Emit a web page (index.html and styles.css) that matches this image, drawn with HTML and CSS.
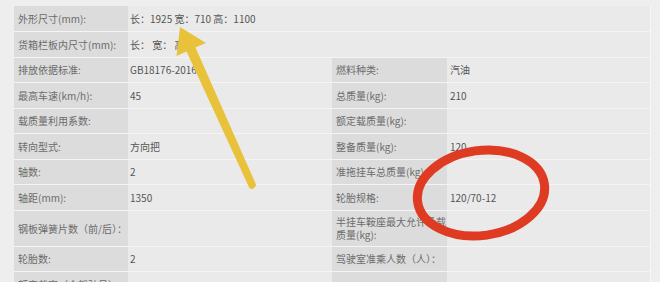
FILE: index.html
```html
<!DOCTYPE html>
<html lang="zh-CN">
<head>
<meta charset="utf-8">
<link rel="stylesheet" href="styles.css">
</head>
<body>
<div class="page">
  <table class="spec">
    <colgroup>
      <col class="c-label1"><col class="c-val1"><col class="c-label2"><col class="c-val2">
    </colgroup>
    <tr><td class="lab">外形尺寸(mm):</td><td class="val" colspan="3">长：1925 宽：710 高：1100</td></tr>
    <tr><td class="lab">货箱栏板内尺寸(mm):</td><td class="val" colspan="3">长： 宽： 高：</td></tr>
    <tr><td class="lab">排放依据标准:</td><td class="val">GB18176-2016</td><td class="lab lab2">燃料种类:</td><td class="val val2">汽油</td></tr>
    <tr><td class="lab">最高车速(km/h):</td><td class="val">45</td><td class="lab lab2">总质量(kg):</td><td class="val val2">210</td></tr>
    <tr><td class="lab">载质量利用系数:</td><td class="val"></td><td class="lab lab2">额定载质量(kg):</td><td class="val val2"></td></tr>
    <tr><td class="lab">转向型式:</td><td class="val">方向把</td><td class="lab lab2">整备质量(kg):</td><td class="val val2">120</td></tr>
    <tr><td class="lab">轴数:</td><td class="val">2</td><td class="lab lab2">准拖挂车总质量(kg):</td><td class="val val2"></td></tr>
    <tr><td class="lab">轴距(mm):</td><td class="val">1350</td><td class="lab lab2">轮胎规格:</td><td class="val val2">120/70-12</td></tr>
    <tr class="tall"><td class="lab">钢板弹簧片数（前/后）：</td><td class="val"></td><td class="lab lab2">半挂车鞍座最大允许承载质量(kg):</td><td class="val val2"></td></tr>
    <tr><td class="lab">轮胎数:</td><td class="val">2</td><td class="lab lab2">驾驶室准乘人数（人）：</td><td class="val val2"></td></tr>
    <tr><td class="lab">额定载客（含驾驶员）：</td><td class="val"></td><td class="lab lab2"></td><td class="val val2"></td></tr>
  </table>
  <svg class="marks" width="660" height="282" viewBox="0 0 660 282">
    <polygon class="arrow" points="180,27 206,43 195.5,47.5 256.4,185.4 253,189 249.6,188.6 186.5,51.5 176.5,56"/>
    <ellipse class="ring" cx="481" cy="193" rx="64" ry="42.5" transform="rotate(-8 481 193)"/>
  </svg>
</div>
</body>
</html>
```
FILE: styles.css
```css
html, body {
  margin: 0;
  padding: 0;
  background: #eeeeee;
  overflow: hidden;
}
.page {
  position: relative;
  width: 660px;
  height: 282px;
  padding: 6px 0 0 14px;
  box-sizing: border-box;
  font-family: "Noto Sans CJK SC", "Noto Sans", sans-serif;
  font-size: 10px;
}
.spec {
  border-collapse: collapse;
  table-layout: fixed;
  width: 636px;
  border-right: 1px solid #f6f6f6;
}
.c-label1 { width: 114px; }
.c-val1 { width: 204px; }
.c-label2 { width: 115px; }
.c-val2 { width: 203px; }
.spec tr { height: 25.5px; }
.spec tr.tall { height: 36px; }
.spec td {
  padding: 0 0 0 4px;
  border-bottom: 1px solid #f4f4f4;
  vertical-align: middle;
  line-height: 13px;
  white-space: normal;
}
.lab {
  background: #dcdcdc;
  color: #6b6b6b;
}
.val {
  background: #eaeaea;
  color: #555555;
  padding-left: 2px !important;
}
.val2 { padding-left: 3px !important; }
.marks {
  position: absolute;
  left: 0;
  top: 0;
  pointer-events: none;
}
.arrow {
  fill: #e9c23c;
}
.ring {
  fill: none;
  stroke: #df3a22;
  stroke-width: 9;
}
```
